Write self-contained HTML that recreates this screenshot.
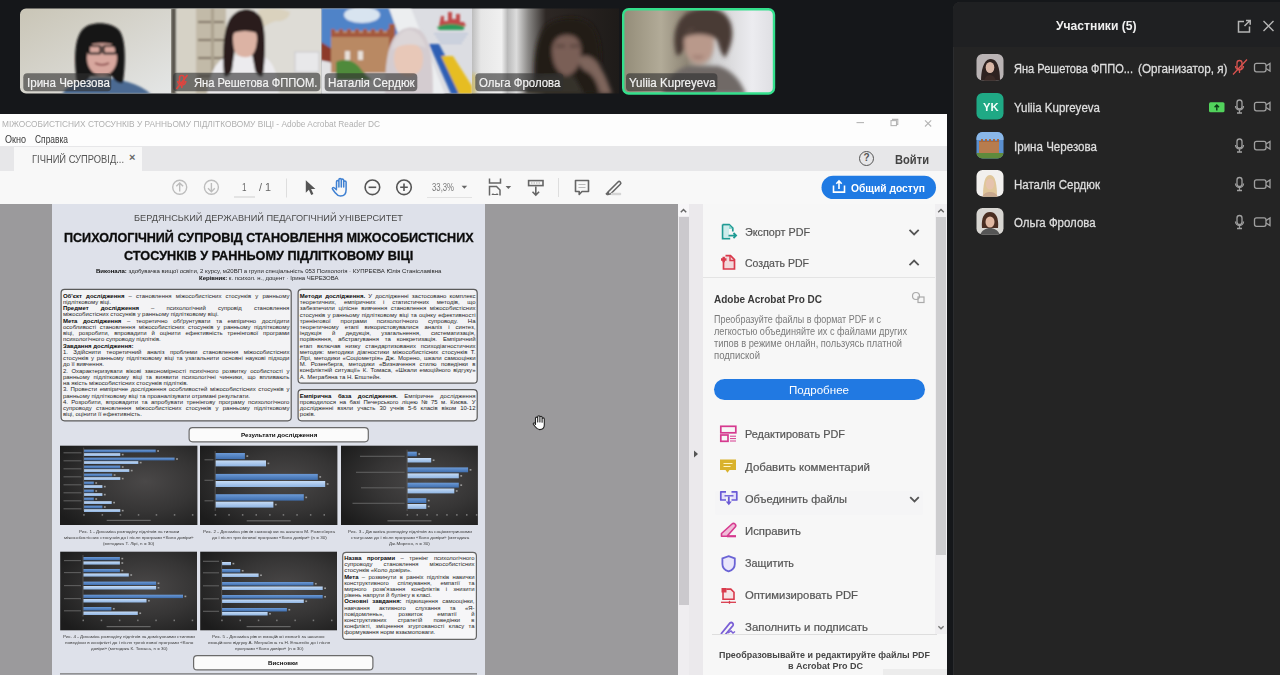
<!DOCTYPE html>
<html><head><meta charset="utf-8">
<style>
*{margin:0;padding:0;box-sizing:border-box}
html,body{width:1280px;height:675px;overflow:hidden;background:#15171a;font-family:"Liberation Sans",sans-serif}
.abs{position:absolute}
/* video tiles */
.tile{position:absolute;top:8px;height:86px;overflow:hidden}
.lbl{position:absolute;left:3px;top:73px;height:18px;border-radius:4px;background:rgba(40,40,40,.62);color:#f2f2f2;font-size:12.5px;line-height:18px;padding:0 4px;white-space:nowrap}
/* participants */
#pp{position:absolute;left:953px;top:2px;width:327px;height:673px;background:#242424;border-top-left-radius:7px;box-shadow:inset 1px 1px 0 #2b2c2e;overflow:hidden}
#pph{position:absolute;left:0;top:0;width:327px;height:45px;background:#1f2022;border-top-left-radius:7px}
.prow{position:absolute;left:0;width:327px;height:38px}
.av{position:absolute;left:24px;top:6px;width:26px;height:26px;border-radius:6px;overflow:hidden}
.pn{position:absolute;left:61px;top:0;line-height:38px;font-size:12.5px;color:#dcdcdc;white-space:nowrap}
/* acrobat */
#acro{position:absolute;left:0;top:114px;width:947px;height:561px;background:#fff;overflow:hidden}
#doc{position:absolute;left:0;top:90px;width:678px;height:471px;background:#9b9a9c}
#page{position:absolute;left:52px;top:0;width:433px;height:480px;background:#dfe2eb}
#rp{position:absolute;left:703px;top:90px;width:244px;height:471px;background:#f7f7f7}
.ri{position:absolute;left:744.5px;font-size:11.5px;color:#555;-webkit-text-stroke:0.2px #555;white-space:nowrap;line-height:14px}
.pt{position:absolute;white-space:nowrap;color:#262626}
.pt b{color:#0a0a0a}
#poster{position:absolute;left:52px;top:204px;width:433px;height:471px;overflow:hidden;background:#dee1ea}
</style></head><body>

<!-- video strip -->
<svg class="abs" style="left:0;top:0" width="800" height="100">
  <defs>
    <filter id="bl1" x="-10%" y="-10%" width="120%" height="120%"><feGaussianBlur stdDeviation="1.3"/></filter>
    <filter id="bl2" x="-10%" y="-10%" width="120%" height="120%"><feGaussianBlur stdDeviation="3"/></filter>
    <filter id="bl3" x="-10%" y="-10%" width="120%" height="120%"><feGaussianBlur stdDeviation="2"/></filter>
    <clipPath id="t1"><path d="M26 8.4h145v85H26a6 6 0 0 1-6-6V14.4a6 6 0 0 1 6-6z"/></clipPath>
    <clipPath id="t2"><rect x="171" y="8.4" width="150.5" height="85"/></clipPath>
    <clipPath id="t3"><rect x="321.5" y="8.4" width="150.5" height="85"/></clipPath>
    <clipPath id="t4"><rect x="472" y="8.4" width="147" height="85"/></clipPath>
    <clipPath id="t5"><rect x="623" y="9" width="151" height="84.5" rx="5"/></clipPath>
    <linearGradient id="g1" x1="0" y1="0" x2="1" y2="1"><stop offset="0" stop-color="#c9c5b6"/><stop offset="0.6" stop-color="#d9d8d2"/><stop offset="1" stop-color="#e4e6e6"/></linearGradient>
    <linearGradient id="g4" x1="0" y1="0" x2="1" y2="0"><stop offset="0" stop-color="#bdbdbd"/><stop offset="0.06" stop-color="#e6e6e6"/><stop offset="0.2" stop-color="#f0f0f0"/><stop offset="0.24" stop-color="#b9b9b9"/><stop offset="0.3" stop-color="#dcdcdc"/><stop offset="0.38" stop-color="#8a8886"/><stop offset="0.5" stop-color="#2d2724"/><stop offset="1" stop-color="#1e1b19"/></linearGradient>
    <linearGradient id="g5" x1="0" y1="0" x2="1" y2="0"><stop offset="0" stop-color="#938c78"/><stop offset="0.25" stop-color="#b2ab98"/><stop offset="0.42" stop-color="#8e8676"/><stop offset="0.6" stop-color="#cfcfd0"/><stop offset="0.85" stop-color="#ececf0"/><stop offset="1" stop-color="#dedee2"/></linearGradient>
  </defs>
  <!-- tile1 -->
  <g clip-path="url(#t1)">
    <rect x="20" y="8" width="151" height="86" fill="url(#g1)"/>
    <g filter="url(#bl1)">
      <path d="M62 94C70 82 85 78 102 78S140 84 151 94z" fill="#4b6b93"/>
      <path d="M77 83C74 60 74 40 82 30S112 22 119 30S126 62 123 83C118 84 114 80 112 76H90C88 80 84 84 77 83z" fill="#151313"/>
      <ellipse cx="102" cy="58" rx="15" ry="18" fill="#d8a79e"/>
      <path d="M84 47C84 32 92 26 102 26S120 32 120 47C112 42 92 42 84 47z" fill="#151313"/>
      <g fill="none" stroke="#1d1a1a" stroke-width="2.2"><rect x="89" y="46" width="11.5" height="7.5" rx="1"/><rect x="103.5" y="46" width="12.5" height="7.5" rx="1"/></g>
      <path d="M95 63c4 2.5 10 2.5 14 0" stroke="#8a4a4a" stroke-width="1.8" fill="none"/>
    </g>
  </g>
  <!-- tile2 -->
  <g clip-path="url(#t2)">
    <rect x="171" y="8" width="151" height="86" fill="#dcdbd4"/>
    <g filter="url(#bl1)">
      <rect x="171" y="8" width="5" height="86" fill="#5a5750"/>
      <rect x="177" y="8" width="20" height="86" fill="#d6d2c6"/>
      <rect x="196" y="8" width="30" height="86" fill="#c2baa8"/>
      <path d="M198 22h26M198 40h26M198 58h26M198 76h26" stroke="#7a705e" stroke-width="2"/>
      <rect x="211" y="8" width="3" height="86" fill="#aaa08e"/>
      <rect x="226" y="8" width="96" height="86" fill="#dedcd6"/>
      <path d="M258 10c8-3 24-2 32 2 0 5-6 10-14 9-8 2-12 8-16 4z" fill="#d8d0b8" opacity="0.8"/>
      <rect x="295" y="52" width="24" height="20" fill="#e8e8ea" stroke="#c8c8cc" stroke-width="1"/>
      <path d="M207 94c2-20 10-36 22-38l33 0c12 4 16 20 17 38z" fill="#ecebee"/>
      <path d="M224 76c-2-24-1-50 8-60s22-8 28 0 6 36 3 60c-4 2-7-2-8-6l-4-22h-16l-3 22c-2 6-5 8-8 6z" fill="#2a1f1e"/>
      <path d="M233 38c0-7 4-10 12-10s12 3 12 10c0 8-2 14-5 17s-10 3-14 0-5-9-5-17z" fill="#dcb3a4"/>
      <path d="M231 34c3-9 24-11 28 0-8-4-20-4-28 0z" fill="#2a1f1e"/>
    </g>
  </g>
  <!-- tile3 -->
  <g clip-path="url(#t3)">
    <rect x="321" y="8" width="152" height="86" fill="#dcdde2"/>
    <g filter="url(#bl1)">
      <path d="M321 8h68l14 40h-82z" fill="#4f83c8"/>
      <ellipse cx="362" cy="15" rx="18" ry="8" fill="#d8e4f0"/>
      <path d="M389 8h22l34 86h-24z" fill="#eceef0"/>
      <rect x="321" y="62" width="70" height="32" fill="#e2e2e4"/>
      <path d="M321 42l16 10v12l-16-4z" fill="#8d3a2a"/>
      <rect x="331" y="31" width="60" height="42" fill="#b98963"/>
      <path d="M331 37v-8h4v4h4v-4h4v4h4v-4h4v4h4v-4h4v4h4v-4h4v4h4v-4h4v4h4v-4h4v4h4v-4h4v8z" fill="#a4583c"/>
      <rect x="389" y="24" width="6" height="48" fill="#a35a3e"/>
      <path d="M336 62c8-4 18-2 24 6s8 8 12 12h-36z" fill="#4f8a3a"/>
      <rect x="345" y="51" width="5" height="9" fill="#e8e0d8"/>
      <rect x="358" y="51" width="5" height="9" fill="#e8e0d8"/>
      <path d="M429 44h10l26 50h-14z" fill="#2f5fb4"/>
      <path d="M441 56h12l19 30v8h-13z" fill="#e6bd22"/>
      <path d="M439 26l2-10h3v5h4v-9h4v7h4v-5h4v8h4l2 4z" fill="#c04a4a"/>
      <path d="M437 27c8-4 20-4 28 0l-2 3h-24z" fill="#2f9a5a"/>
      <path d="M434 34h34M436 37h30M438 40h26M440 43h22" stroke="#94a8cc" stroke-width="0.7"/>
      <path d="M385 94c0-30 2-62 22-66s26 18 26 66z" fill="#d4ccd0"/>
      <path d="M394 58c0-10 5-15 14-15s15 5 15 15-3 17-15 19c-11-2-14-9-14-19z" fill="#e8c8b8"/>
      <path d="M392 50c2-12 10-20 17-20s15 8 17 18c-10-5-24-5-34 2z" fill="#dcd6d8"/>
    </g>
  </g>
  <!-- tile4 -->
  <g clip-path="url(#t4)">
    <rect x="472" y="8" width="148" height="86" fill="url(#g4)"/>
    <g filter="url(#bl3)">
      <path d="M536 94c-4-30 0-58 10-68s36-12 46 0 10 36 6 68z" fill="#231c19"/>
      <path d="M552 50c0-9 6-15 15-15s14 6 14 15-2 22-14 26c-11-2-15-15-15-26z" fill="#7a5f56"/>
      <path d="M556 46h9M570 46h9" stroke="#3a2a26" stroke-width="2"/>
      <path d="M578 58c8-4 14-2 20 6s10 18 14 30h-12c-2-10-6-18-12-22-6-2-10-8-10-14z" fill="#7e655c"/>
      <path d="M524 94c4-10 10-16 20-18h30l10 18z" fill="#36302b"/>
      <rect x="472" y="74" width="2.5" height="20" fill="#d8b820"/>
    </g>
  </g>
  <!-- tile5 -->
  <g clip-path="url(#t5)">
    <rect x="623" y="8" width="152" height="86" fill="url(#g5)"/>
    <g filter="url(#bl3)">
      <path d="M662 94c4-14 12-24 26-28h30c14 4 22 14 28 28z" fill="#6f6966"/>
      <path d="M677 56c-6-18-2-40 16-46s34 0 38 14-2 26-6 34c-4-4-6-12-8-18-6-6-24-8-30 0-2 8-4 14-10 16z" fill="#4a3b35"/>
      <path d="M684 42c0-9 6-14 14-14s16 5 16 14c0 12-4 21-15 22-10-1-15-10-15-22z" fill="#b9998b"/>
      <path d="M683 38c6-10 16-12 24-10s9 6 8 10c-10-5-22-5-32 0z" fill="#4a3b35"/>
      <path d="M693 56c3 2 8 2 10 0" stroke="#7a5550" stroke-width="1.5" fill="none"/>
    </g>
  </g>
  <rect x="623.2" y="9.2" width="150.8" height="84.3" rx="5.5" fill="none" stroke="#34e08d" stroke-width="2.4"/>
  <!-- label backgrounds -->
  <rect x="23.3" y="73.3" width="88" height="18" rx="4" fill="rgba(48,48,48,0.62)"/>
  <rect x="173" y="72.7" width="147.3" height="18.6" rx="4" fill="rgba(48,48,48,0.62)"/>
  <rect x="324.7" y="73.3" width="92.6" height="18" rx="4" fill="rgba(48,48,48,0.62)"/>
  <rect x="475.3" y="73.3" width="88" height="18" rx="4" fill="rgba(48,48,48,0.62)"/>
  <rect x="626" y="73.3" width="91.4" height="18" rx="4" fill="rgba(48,48,48,0.62)"/>
  <g stroke="#e0443e" stroke-width="1.6" fill="none"><rect x="179.5" y="75.5" width="4.5" height="8" rx="2.2"/><path d="M177.8 81a4 4 0 0 0 8 0M181.8 85v3M187.5 75l-11 14"/></g>
</svg>
<div class="abs" style="transform:scaleX(0.9644);transform-origin:0 0;left:26.7px;top:75.5px;font-size:12px;color:#f2f2f2;-webkit-text-stroke:0.2px #f2f2f2;white-space:nowrap">Ірина Черезова</div>
<div class="abs" style="transform:scaleX(0.9293);transform-origin:0 0;left:193.7px;top:75.5px;font-size:12px;color:#f2f2f2;-webkit-text-stroke:0.2px #f2f2f2;white-space:nowrap">Яна Решетова ФППОМ.</div>
<div class="abs" style="transform:scaleX(0.9675);transform-origin:0 0;left:328px;top:75.5px;font-size:12px;color:#f2f2f2;-webkit-text-stroke:0.2px #f2f2f2;white-space:nowrap">Наталія Сердюк</div>
<div class="abs" style="transform:scaleX(0.9507);transform-origin:0 0;left:478.7px;top:75.5px;font-size:12px;color:#f2f2f2;-webkit-text-stroke:0.2px #f2f2f2;white-space:nowrap">Ольга Фролова</div>
<div class="abs" style="transform:scaleX(0.9677);transform-origin:0 0;left:628.5px;top:75.5px;font-size:12px;color:#f2f2f2;-webkit-text-stroke:0.2px #f2f2f2;white-space:nowrap">Yuliia Kupreyeva</div>

<!-- participants panel -->
<div id="pp">
  <div id="pph"></div>
</div>
<div class="abs" style="transform:scaleX(0.9713);transform-origin:0 0;left:1056px;top:19px;font-size:12.5px;font-weight:bold;color:#f0f0f0;white-space:nowrap">Участники (5)</div>
<svg class="abs" style="left:0;top:0" width="1280" height="250">
  <defs>
    <clipPath id="av1"><rect x="976.5" y="54" width="27" height="26.5" rx="6"/></clipPath>
    <clipPath id="av3"><rect x="976.5" y="132" width="27" height="26.5" rx="6"/></clipPath>
    <clipPath id="av4"><rect x="976.5" y="170" width="27" height="26.5" rx="6"/></clipPath>
    <clipPath id="av5"><rect x="976.5" y="208" width="27" height="26.5" rx="6"/></clipPath>
  </defs>
  <g clip-path="url(#av1)">
    <rect x="976" y="54" width="28" height="27" fill="#b9b3b4"/>
    <path d="M981 81c0-9 2-21 9-22s10 8 10 22z" fill="#2e2220"/>
    <ellipse cx="990" cy="67.5" rx="4.3" ry="5.5" fill="#d8b6a6"/>
    <path d="M984 81c1-4 3-6 6-6s5 2 6 6z" fill="#3b2a26"/>
  </g>
  <rect x="976.5" y="93" width="27" height="26.5" rx="6" fill="#1fa985"/>
  <g clip-path="url(#av3)">
    <rect x="976" y="132" width="28" height="27" fill="#5a8fd0"/>
    <rect x="976" y="132" width="28" height="8" fill="#8ab7e8"/>
    <path d="M979 142h20v13h-20z" fill="#b77c4e"/>
    <path d="M979 141h2v-2h2v2h2v-2h2v2h2v-2h2v2h2v-2h2v2h2v-2h2v3h-20z" fill="#a8683e"/>
    <rect x="976" y="153" width="28" height="6" fill="#5f8a3c"/>
  </g>
  <g clip-path="url(#av4)">
    <rect x="976" y="170" width="28" height="27" fill="#f2f0ee"/>
    <path d="M983 197c0-10 1-22 7-22s7 12 7 22z" fill="#e0c69a"/>
    <ellipse cx="990" cy="184" rx="4.2" ry="5.5" fill="#e6c3ad"/>
    <path d="M982 197c2-4 5-5 8-5s6 1 8 5z" fill="#c9a98f"/>
  </g>
  <g clip-path="url(#av5)">
    <rect x="976" y="208" width="28" height="27" fill="#d8d6d2"/>
    <path d="M982 228c-1-10 2-16 8-16s9 6 8 16z" fill="#4a2e22"/>
    <ellipse cx="990" cy="222" rx="4.5" ry="5.5" fill="#e0b8a2"/>
    <path d="M980 235c2-5 6-7 10-7s8 2 10 7z" fill="#555"/>
  </g>
  <g fill="none" stroke="#a0a0a0" stroke-width="1.3"><rect x="1254.5" y="63.3" width="11.5" height="8.5" rx="2"/><path d="M1266.0 66.0l4-2.5v7.5l-4-2.5"/></g><g fill="none" stroke="#a0a0a0" stroke-width="1.3"><rect x="1254.5" y="102.3" width="11.5" height="8.5" rx="2"/><path d="M1266.0 105.0l4-2.5v7.5l-4-2.5"/></g><g fill="none" stroke="#a0a0a0" stroke-width="1.3"><rect x="1237.0" y="100.0" width="5" height="9" rx="2.5"/><path d="M1235.5 106.0a4 4 0 0 0 8 0M1239.5 110.0v3M1237.0 113.0h5"/></g><g fill="none" stroke="#a0a0a0" stroke-width="1.3"><rect x="1254.5" y="141.3" width="11.5" height="8.5" rx="2"/><path d="M1266.0 144.0l4-2.5v7.5l-4-2.5"/></g><g fill="none" stroke="#a0a0a0" stroke-width="1.3"><rect x="1237.0" y="139.0" width="5" height="9" rx="2.5"/><path d="M1235.5 145.0a4 4 0 0 0 8 0M1239.5 149.0v3M1237.0 152.0h5"/></g><g fill="none" stroke="#a0a0a0" stroke-width="1.3"><rect x="1254.5" y="179.8" width="11.5" height="8.5" rx="2"/><path d="M1266.0 182.5l4-2.5v7.5l-4-2.5"/></g><g fill="none" stroke="#a0a0a0" stroke-width="1.3"><rect x="1237.0" y="177.5" width="5" height="9" rx="2.5"/><path d="M1235.5 183.5a4 4 0 0 0 8 0M1239.5 187.5v3M1237.0 190.5h5"/></g><g fill="none" stroke="#a0a0a0" stroke-width="1.3"><rect x="1254.5" y="217.8" width="11.5" height="8.5" rx="2"/><path d="M1266.0 220.5l4-2.5v7.5l-4-2.5"/></g><g fill="none" stroke="#a0a0a0" stroke-width="1.3"><rect x="1237.0" y="215.5" width="5" height="9" rx="2.5"/><path d="M1235.5 221.5a4 4 0 0 0 8 0M1239.5 225.5v3M1237.0 228.5h5"/></g><g fill="none" stroke="#d9534f" stroke-width="1.3"><rect x="1237" y="60.5" width="5" height="9" rx="2.5"/><path d="M1235.5 66a4 4 0 0 0 8 0M1239.5 70v3M1247 59.5l-14 15"/></g><rect x="1209" y="102.2" width="15.5" height="10" rx="1.5" fill="#52d35c"/><path d="M1216.8 110.5v-5M1214.6 107.3l2.2-2.2 2.2 2.2" stroke="#0b3a17" stroke-width="1.4" fill="none"/><path d="M1244 21.5h-5.5v10.5h11v-5.5M1244.5 26l5.5-5.5M1246 20.5h4.2v4.2" fill="none" stroke="#b5b5b5" stroke-width="1.5"/><path d="M1263.5 21l10 10M1273.5 21l-10 10" stroke="#b5b5b5" stroke-width="1.4"/>
</svg>
<div class="abs" style="transform:scaleX(1.0209);transform-origin:0 0;left:982.8px;top:100.5px;font-size:11px;font-weight:bold;color:#f4fffb;white-space:nowrap">YK</div>
<div class="abs" style="transform:scaleX(0.8831);transform-origin:0 0;left:1014px;top:62px;font-size:12.5px;color:#dedede;-webkit-text-stroke:0.3px #dedede;white-space:nowrap">Яна Решетова ФППО...</div>
<div class="abs" style="transform:scaleX(0.9349);transform-origin:0 0;left:1138px;top:62px;font-size:12.5px;color:#dedede;-webkit-text-stroke:0.3px #dedede;white-space:nowrap">(Организатор, я)</div>
<div class="abs" style="transform:scaleX(0.9235);transform-origin:0 0;left:1014px;top:101px;font-size:12.5px;color:#dedede;-webkit-text-stroke:0.3px #dedede;white-space:nowrap">Yuliia Kupreyeva</div>
<div class="abs" style="transform:scaleX(0.9258);transform-origin:0 0;left:1014px;top:140px;font-size:12.5px;color:#dedede;-webkit-text-stroke:0.3px #dedede;white-space:nowrap">Ірина Черезова</div>
<div class="abs" style="transform:scaleX(0.9213);transform-origin:0 0;left:1014px;top:178px;font-size:12.5px;color:#dedede;-webkit-text-stroke:0.3px #dedede;white-space:nowrap">Наталія Сердюк</div>
<div class="abs" style="transform:scaleX(0.9160);transform-origin:0 0;left:1014px;top:216px;font-size:12.5px;color:#dedede;-webkit-text-stroke:0.3px #dedede;white-space:nowrap">Ольга Фролова</div>


<!-- acrobat window -->
<div id="acro">

  <div class="abs" style="left:0;top:0;width:947px;height:32px;background:#fdfdfd"></div>
  <div class="abs" style="transform:scaleX(0.9248);transform-origin:0 0;left:2px;top:4.5px;font-size:9px;color:#b0b0b0;white-space:nowrap">МІЖОСОБИСТІСНИХ СТОСУНКІВ У РАННЬОМУ ПІДЛІТКОВОМУ ВІЦІ - Adobe Acrobat Reader DC</div>
  <!-- window controls -->
  <svg class="abs" style="left:850px;top:0" width="97" height="17"><g fill="none" stroke="#b5b5b5" stroke-width="1.1"><path d="M6.5 8.6h7.5"/><rect x="41" y="6.6" width="5.5" height="5"/><path d="M42.5 6.6v-1.2h5.3v5h-1.3"/><path d="M75 6.3l6.2 6.2M81.2 6.3l-6.2 6.2"/></g></svg>
  <div class="abs" style="transform:scaleX(0.8604);transform-origin:0 0;left:5px;top:19px;font-size:10.5px;color:#3a3a3a;white-space:nowrap">Окно</div>
  <div class="abs" style="transform:scaleX(0.8009);transform-origin:0 0;left:35px;top:19px;font-size:10.5px;color:#3a3a3a;white-space:nowrap">Справка</div>
  <!-- tab bar -->
  <div class="abs" style="left:0;top:32px;width:947px;height:25px;background:#e7e7e9"></div>
  <div class="abs" style="left:14px;top:33px;width:128px;height:24px;background:#f8f8f8"></div>
  <div class="abs" style="transform:scaleX(0.8495);transform-origin:0 0;left:32px;top:39px;font-size:11px;color:#555;white-space:nowrap">ГІЧНИЙ СУПРОВІД...</div>
  <div class="abs" style="left:129px;top:37px;font-size:11px;color:#666;font-weight:bold">×</div>
  <div class="abs" style="left:859px;top:37px;width:15px;height:15px;border:1.3px solid #555;border-radius:50%;font-size:10px;line-height:12.5px;text-align:center;color:#555;font-weight:bold">?</div>
  <div class="abs" style="transform:scaleX(0.9279);transform-origin:0 0;left:895px;top:39px;font-size:12px;color:#444;font-weight:bold;white-space:nowrap">Войти</div>
  <!-- toolbar -->
  <div class="abs" style="left:0;top:57px;width:947px;height:33px;background:#f8f8f8"></div>

  <svg class="abs" style="left:0;top:57px" width="947" height="33" viewBox="0 57 947 33">
    <g fill="none" stroke="#bdbdbd" stroke-width="1.4">
      <circle cx="179.7" cy="73.3" r="7"/><path d="M179.7 77.5V69.3M176.3 72.3l3.4-3.4 3.4 3.4"/>
      <circle cx="211.4" cy="73.3" r="7"/><path d="M211.4 69.1v8.2M208 74.3l3.4 3.4 3.4-3.4"/>
    </g>
    <path d="M234 83h21" stroke="#d6d6d6" stroke-width="1.2"/>
    <path d="M286.5 64.5v19" stroke="#dedede" stroke-width="1"/>
    <path d="M558.5 64v19" stroke="#dedede" stroke-width="1"/>
    <path d="M427 83.5h45" stroke="#e2e2e2" stroke-width="1.2"/>
    <!-- cursor -->
    <path d="M305.8 66.2v12.6l3.1-3 2.3 5.1 2.2-1-2.3-5h4.3z" fill="#555"/>
    <!-- hand -->
    <path d="M336.5 74.2v-6.4a1.2 1.2 0 0 1 2.4 0v5.2v-7.3a1.2 1.2 0 0 1 2.4 0v7.2v-6.6a1.2 1.2 0 0 1 2.4 0v6.8v-5a1.2 1.2 0 0 1 2.4 0v7.6c0 4-2.2 6.3-5.6 6.3-2.6 0-3.8-1.4-5.3-3.3l-2.6-3.4a1.1 1.1 0 0 1 1.6-1.5l2.3 2" fill="none" stroke="#3f80d2" stroke-width="1.5" stroke-linejoin="round" stroke-linecap="round"/>
    <g fill="none" stroke="#555" stroke-width="1.6">
      <circle cx="372.4" cy="73.3" r="7.3"/><path d="M368.6 73.3h7.6"/>
      <circle cx="404" cy="73.3" r="7.3"/><path d="M400.2 73.3h7.6M404 69.5v7.6"/>
    </g>
    <path d="M461.6 71.8h5.6l-2.8 3z" fill="#666"/>
    <path d="M505.6 72h5.6l-2.8 3z" fill="#666"/>
    <!-- fit page -->
    <g fill="none" stroke="#666" stroke-width="1.5">
      <path d="M489.5 64.5v4.5h11v-4.5"/>
      <path d="M489.5 81.5v-9h7l3.5 3.5v5.5"/>
      <path d="M492 80.5h6M492 80.5l1.2-1.2M498 80.5l-1.2-1.2" stroke-width="1"/>
    </g>
    <!-- scroll -->
    <rect x="528.6" y="66.6" width="14.4" height="5" fill="none" stroke="#666" stroke-width="1.6"/>
    <path d="M531 69h10" stroke="#aaa" stroke-width="1" stroke-dasharray="1.5 1"/>
    <path d="M535.8 72.5v8.6M532.5 77.8l3.3 3.3 3.3-3.3" fill="none" stroke="#666" stroke-width="1.6"/>
    <!-- comment -->
    <path d="M575.5 66.5h13v11h-6.5l-2.8 3v-3h-3.7z" fill="none" stroke="#666" stroke-width="1.6" stroke-linejoin="round"/>
    <path d="M578.5 70.5h7M578.5 73.5h7" stroke="#bbb" stroke-width="1"/>
    <!-- highlighter -->
    <path d="M608.5 77.5l9.5-9.5a1.6 1.6 0 0 1 2.3 2.3l-9.5 9.5-3 .8z" fill="none" stroke="#666" stroke-width="1.6" stroke-linejoin="round"/>
    <path d="M606 80.5l2.5-2.5" stroke="#666" stroke-width="1.8"/>
    <path d="M612 80h8" stroke="#d5d5d5" stroke-width="2.5" stroke-linecap="round"/>
    <!-- share button -->
    <rect x="821.5" y="61.7" width="114.5" height="23.4" rx="11.7" fill="#1f7ae3"/>
    <path d="M833.5 71.5v6.6h11v-6.6M839 75v-7.8M836.3 69.7l2.7-2.7 2.7 2.7" fill="none" stroke="#fff" stroke-width="1.6"/>
  </svg>
  <div class="abs" style="transform:scaleX(0.8090);transform-origin:0 0;left:241.8px;top:68px;font-size:10px;color:#666">1</div>
  <div class="abs" style="transform:scaleX(1.0787);transform-origin:0 0;left:259px;top:68px;font-size:10px;color:#666;white-space:nowrap">/ 1</div>
  <div class="abs" style="transform:scaleX(0.7758);transform-origin:0 0;left:431.5px;top:68px;font-size:10px;color:#7a7a7a;white-space:nowrap">33,3%</div>
  <div class="abs" style="transform:scaleX(0.8924);transform-origin:0 0;left:851px;top:67.5px;font-size:11.5px;color:#fff;font-weight:bold;white-space:nowrap">Общий доступ</div>
  <div id="doc"><div id="page"></div></div>
  <div id="rp"></div>
  <!-- doc scrollbar + strip -->
  <div class="abs" style="left:678px;top:90px;width:11px;height:471px;background:#efedf0"></div>
  <div class="abs" style="left:678px;top:90px;width:11px;height:12px;background:#f7f6f8"></div>
  <svg class="abs" style="left:678px;top:90px" width="11" height="12"><path d="M2.8 8.2l2.7-2.7 2.7 2.7" fill="none" stroke="#666" stroke-width="1.5"/></svg>
  <div class="abs" style="left:679px;top:103px;width:9.5px;height:388px;background:#cbc9cd"></div>
  <div class="abs" style="left:689px;top:90px;width:14px;height:471px;background:#ebe9ec"></div>
  <svg class="abs" style="left:689px;top:334px" width="14" height="12"><path d="M5 2.5l4 3.5-4 3.5z" fill="#555"/></svg>
  <!-- right pane scrollbar -->
  <div class="abs" style="left:935px;top:90px;width:12px;height:430px;background:#f0eff1"></div>
  <svg class="abs" style="left:935px;top:90px" width="12" height="12"><path d="M3.2 8.2l2.8-2.8 2.8 2.8" fill="none" stroke="#666" stroke-width="1.4"/></svg>
  <div class="abs" style="left:936px;top:103px;width:10px;height:338px;background:#cdcdcf"></div>
  <svg class="abs" style="left:935px;top:508px" width="12" height="12"><path d="M3.4 4.2l2.6 2.6 2.6-2.6" fill="none" stroke="#777" stroke-width="1.3"/></svg>
  <!-- right pane items -->
  <div class="abs" style="left:703px;top:163px;width:232px;height:1px;background:#e4e4e4"></div>
  <div class="abs" style="left:715px;top:377px;width:208px;height:24px;background:#f5f5f6;border-radius:3px"></div>
  <div class="ri" style="transform:scaleX(0.9365);transform-origin:0 0;top:111px">Экспорт PDF</div>
  <div class="ri" style="transform:scaleX(0.9155);transform-origin:0 0;top:142px">Создать PDF</div>
  <div class="abs" style="transform:scaleX(0.9094);transform-origin:0 0;left:713.5px;top:179px;font-size:11px;font-weight:bold;color:#3a3a3a;white-space:nowrap">Adobe Acrobat Pro DC</div>
  <div class="abs" style="transform:scaleX(0.8939);transform-origin:0 0;left:713.5px;top:200px;font-size:10px;color:#7a7a7a;white-space:nowrap">Преобразуйте файлы в формат PDF и с</div>
  <div class="abs" style="transform:scaleX(0.9141);transform-origin:0 0;left:713.5px;top:212px;font-size:10px;color:#7a7a7a;white-space:nowrap">легкостью объединяйте их с файлами других</div>
  <div class="abs" style="transform:scaleX(0.9289);transform-origin:0 0;left:713.5px;top:224px;font-size:10px;color:#7a7a7a;white-space:nowrap">типов в режиме онлайн, пользуясь платной</div>
  <div class="abs" style="transform:scaleX(0.9537);transform-origin:0 0;left:713.5px;top:236px;font-size:10px;color:#7a7a7a;white-space:nowrap">подпиской</div>
  <div class="abs" style="left:713.5px;top:265px;width:211px;height:21px;border-radius:11px;background:#2179e2"></div>
  <div class="abs" style="transform:scaleX(1.0060);transform-origin:0 0;left:788.7px;top:270px;font-size:11.5px;color:#fff;white-space:nowrap">Подробнее</div>
  <div class="ri" style="transform:scaleX(0.9466);transform-origin:0 0;top:313px">Редактировать PDF</div>
  <div class="ri" style="transform:scaleX(1.0006);transform-origin:0 0;top:346px">Добавить комментарий</div>
  <div class="ri" style="transform:scaleX(0.9613);transform-origin:0 0;top:378px">Объединить файлы</div>
  <div class="ri" style="transform:scaleX(0.9854);transform-origin:0 0;top:410px">Исправить</div>
  <div class="ri" style="transform:scaleX(0.9389);transform-origin:0 0;top:442px">Защитить</div>
  <div class="ri" style="transform:scaleX(0.9803);transform-origin:0 0;top:474px">Оптимизировать PDF</div>
  <div class="ri" style="transform:scaleX(0.9907);transform-origin:0 0;top:506px">Заполнить и подписать</div>
  <svg class="abs" style="left:703px;top:90px" width="244" height="471" viewBox="703 204 244 471">
    <g fill="none" stroke="#555" stroke-width="1.8">
      <path d="M909.5 229.8l4.6 4.6 4.6-4.6"/>
      <path d="M909.5 265.2l4.6-4.6 4.6 4.6"/>
      <path d="M910.2 497.2l4.3 4.3 4.3-4.3"/>
    </g>
    <!-- export icon teal -->
    <path d="M722.6 224.6h6.6l3.6 3.6v3.4M722.6 224.6v14h7.6" fill="none" stroke="#1f9b94" stroke-width="1.7"/>
    <rect x="724" y="226" width="5" height="11.5" fill="#cdeceb"/>
    <path d="M729 224.8v4.2h3.6z" fill="#8fd6d0"/>
    <path d="M728.5 235.6h7M733.5 233l2.6 2.6-2.6 2.6" fill="none" stroke="#1f9b94" stroke-width="1.8"/>
    <!-- create icon red -->
    <path d="M723.5 258.5v10.5h11v-9.3l-4-4h-5" fill="#f2d9dc" stroke="#d93a4c" stroke-width="1.7"/>
    <path d="M721 259.5h5.5M723.7 256.8v5.4" stroke="#d93a4c" stroke-width="2.4"/>
    <path d="M730 256v4.5h4.5" fill="none" stroke="#d93a4c" stroke-width="1.4"/>
    <!-- adobe copy icon -->
    <g fill="none" stroke="#aaa" stroke-width="1.2"><circle cx="916" cy="296" r="3.5"/><rect x="918" y="297" width="6" height="5.5"/></g>
    <!-- edit pdf -->
    <g fill="none" stroke="#d63a8f" stroke-width="1.7">
      <rect x="720.8" y="426.3" width="15" height="6.5"/>
      <rect x="720.8" y="435" width="7.2" height="6.3"/>
      <path d="M730 436.2h6M730 438.6h6M730 441h6" stroke-width="1"/>
    </g>
    <!-- comment yellow -->
    <path d="M720 459.5h16v10.5h-6.5l-2 2.8-2-2.8h-5.5z" fill="#d9b22c"/>
    <path d="M723.5 463.5h9M723.5 466.5h7" stroke="#fff3c4" stroke-width="1.1"/>
    <!-- combine purple -->
    <g fill="#e4e0fa" stroke="#6a5ad6" stroke-width="1.7" stroke-linejoin="round">
      <path d="M726 491.8h-5.2v8.2h5.2"/>
      <path d="M731.5 491.8h5.3v8.2h-5.3"/>
    </g>
    <path d="M724.5 495.8h9" stroke="#6a5ad6" stroke-width="1.4"/>
    <path d="M728.8 496.5v5.5" stroke="#6a5ad6" stroke-width="1.8"/>
    <path d="M725.8 501.5h6l-3 3.8z" fill="#6a5ad6"/>
    <!-- fix pink -->
    <path d="M721.5 533.5l10.5-9.5a2.2 2.2 0 0 1 3.2 3l-8.2 9.2h-5.5z" fill="#f0bcd8" stroke="#d63a8f" stroke-width="1.6" stroke-linejoin="round"/>
    <path d="M727 536.2h9" stroke="#d63a8f" stroke-width="2.2"/>
    <!-- protect -->
    <path d="M728.6 556.2l6.2 2.3v5.5c0 4.2-2.8 6.4-6.2 7.4-3.4-1-6.2-3.2-6.2-7.4v-5.5z" fill="#e9e6fb" stroke="#6a63d5" stroke-width="1.8"/>
    <!-- optimize red -->
    <path d="M723 590.5v8.8h11v-7l-3.2-3.2h-4.5" fill="#f6e3e5" stroke="#d93a4c" stroke-width="1.6"/>
    <rect x="721.5" y="588" width="5" height="4.5" fill="#d93a4c"/>
    <path d="M721 602.3h15" stroke="#d93a4c" stroke-width="1.3"/>
    <path d="M729.5 600.8v3" stroke="#d93a4c" stroke-width="1.3"/>
    <!-- fill & sign purple -->
    <path d="M721 634l9-11a2 2 0 0 1 3 2.5l-8 9.5" fill="none" stroke="#7a5fd6" stroke-width="1.8"/>
    <path d="M728 633l3-2 2 2 2-1.5" fill="none" stroke="#7a5fd6" stroke-width="1.4"/>
  </svg>
  <div class="abs" style="left:703px;top:521px;width:244px;height:40px;background:#f7f7f7"></div>
  <div class="abs" style="transform:scaleX(0.9575);transform-origin:0 0;left:719.4px;top:536px;font-size:9.3px;font-weight:bold;color:#454545;white-space:nowrap">Преобразовывайте и редактируйте файлы PDF</div>
  <div class="abs" style="transform:scaleX(0.9674);transform-origin:0 0;left:787.8px;top:547px;font-size:9.3px;font-weight:bold;color:#454545;white-space:nowrap">в Acrobat Pro DC</div>
  <div class="abs" style="left:712px;top:520px;width:225px;height:1px;background:#dedede"></div>
  <div class="abs" style="left:883px;top:555px;width:64px;height:6px;background:#ececec"></div>
</div>

<svg class="abs" style="left:530px;top:412px" width="20" height="20" viewBox="0 0 20 20"><path d="M5.5 12.5V6.2a1.1 1.1 0 0 1 2.2 0V10V4.8a1.1 1.1 0 0 1 2.2 0V10V5.4a1.1 1.1 0 0 1 2.2 0V10.2V7a1.1 1.1 0 0 1 2.2 0v6c0 3-1.8 4.6-4.6 4.6-2 0-3-1-4.2-2.6L3.4 12.4a1 1 0 0 1 1.5-1.3z" fill="#fff" stroke="#222" stroke-width="1.1" stroke-linejoin="round"/></svg>
<div id="poster">
<!--PSVG--><svg class="abs" style="left:0;top:0" width="433" height="471" viewBox="52 204 433 471">
<defs>
<radialGradient id="cbg" cx="0.62" cy="0.45" r="0.75"><stop offset="0" stop-color="#4a4848"/><stop offset="0.5" stop-color="#363535"/><stop offset="1" stop-color="#1c1c1c"/></radialGradient>
<linearGradient id="bd" x1="0" y1="0" x2="0" y2="1"><stop offset="0" stop-color="#6c9ad6"/><stop offset="1" stop-color="#3f6eae"/></linearGradient>
<linearGradient id="bl" x1="0" y1="0" x2="0" y2="1"><stop offset="0" stop-color="#c6dcf6"/><stop offset="1" stop-color="#8fb4e2"/></linearGradient>
</defs>
<rect x="61.10" y="289.40" width="230.10" height="131.40" rx="3.5" fill="#f3f3f5" stroke="#5a5a5a" stroke-width="1.20"/>
<rect x="298.10" y="289.40" width="179.10" height="93.80" rx="3.5" fill="#f3f3f5" stroke="#5a5a5a" stroke-width="1.20"/>
<rect x="298.10" y="389.60" width="179.10" height="31.20" rx="3.5" fill="#f3f3f5" stroke="#5a5a5a" stroke-width="1.20"/>
<rect x="189.10" y="427.60" width="179.20" height="14.20" rx="3.5" fill="#fbfbfb" stroke="#6a6a6a" stroke-width="1.20"/>
<rect x="342.70" y="552.30" width="133.70" height="87.10" rx="3.5" fill="#f6f6f8" stroke="#666" stroke-width="1.20"/>
<rect x="193.60" y="655.60" width="179.30" height="14.30" rx="3.5" fill="#fbfbfb" stroke="#6a6a6a" stroke-width="1.20"/>
<path d="M60 673.8h417" stroke="#777" stroke-width="1.2"/>
<rect x="60.00" y="445.70" width="137.40" height="79.30" fill="url(#cbg)"/>
<rect x="83.20" y="514.10" width="1.5" height="1.6" fill="#7a7a7a"/>
<rect x="101.60" y="514.10" width="1.5" height="1.6" fill="#7a7a7a"/>
<rect x="119.70" y="514.10" width="1.5" height="1.6" fill="#7a7a7a"/>
<rect x="137.80" y="514.10" width="1.5" height="1.6" fill="#7a7a7a"/>
<rect x="155.70" y="514.10" width="1.5" height="1.6" fill="#7a7a7a"/>
<rect x="173.80" y="514.10" width="1.5" height="1.6" fill="#7a7a7a"/>
<rect x="191.90" y="514.10" width="1.5" height="1.6" fill="#7a7a7a"/>
<rect x="106.70" y="519.80" width="44.00" height="1.2" fill="#666"/>
<rect x="84.00" y="449.60" width="71.70" height="2.80" fill="url(#bd)"/>
<rect x="157.20" y="450.20" width="1.8" height="1.6" fill="#9a9a9a"/>
<rect x="84.00" y="453.20" width="36.30" height="2.80" fill="url(#bl)"/>
<rect x="121.80" y="453.80" width="1.8" height="1.6" fill="#9a9a9a"/>
<rect x="84.00" y="457.60" width="90.60" height="2.80" fill="url(#bd)"/>
<rect x="176.10" y="458.20" width="1.8" height="1.6" fill="#9a9a9a"/>
<rect x="84.00" y="461.20" width="54.30" height="2.80" fill="url(#bl)"/>
<rect x="139.80" y="461.80" width="1.8" height="1.6" fill="#9a9a9a"/>
<rect x="84.00" y="465.60" width="36.30" height="2.80" fill="url(#bd)"/>
<rect x="121.80" y="466.20" width="1.8" height="1.6" fill="#9a9a9a"/>
<rect x="84.00" y="469.20" width="45.30" height="2.80" fill="url(#bl)"/>
<rect x="130.80" y="469.80" width="1.8" height="1.6" fill="#9a9a9a"/>
<rect x="84.00" y="473.60" width="28.20" height="2.80" fill="url(#bd)"/>
<rect x="113.70" y="474.20" width="1.8" height="1.6" fill="#9a9a9a"/>
<rect x="84.00" y="477.20" width="36.30" height="2.80" fill="url(#bl)"/>
<rect x="121.80" y="477.80" width="1.8" height="1.6" fill="#9a9a9a"/>
<rect x="84.00" y="481.60" width="9.80" height="2.80" fill="url(#bd)"/>
<rect x="95.30" y="482.20" width="1.8" height="1.6" fill="#9a9a9a"/>
<rect x="84.00" y="485.20" width="18.40" height="2.80" fill="url(#bl)"/>
<rect x="103.90" y="485.80" width="1.8" height="1.6" fill="#9a9a9a"/>
<rect x="84.00" y="489.60" width="9.80" height="2.80" fill="url(#bd)"/>
<rect x="95.30" y="490.20" width="1.8" height="1.6" fill="#9a9a9a"/>
<rect x="84.00" y="493.20" width="18.40" height="2.80" fill="url(#bl)"/>
<rect x="103.90" y="493.80" width="1.8" height="1.6" fill="#9a9a9a"/>
<rect x="84.00" y="497.60" width="9.80" height="2.80" fill="url(#bd)"/>
<rect x="95.30" y="498.20" width="1.8" height="1.6" fill="#9a9a9a"/>
<rect x="84.00" y="501.20" width="27.70" height="2.80" fill="url(#bl)"/>
<rect x="113.20" y="501.80" width="1.8" height="1.6" fill="#9a9a9a"/>
<rect x="84.00" y="505.60" width="18.40" height="2.80" fill="url(#bd)"/>
<rect x="103.90" y="506.20" width="1.8" height="1.6" fill="#9a9a9a"/>
<rect x="84.00" y="509.20" width="36.30" height="2.80" fill="url(#bl)"/>
<rect x="121.80" y="509.80" width="1.8" height="1.6" fill="#9a9a9a"/>
<path d="M83.70 447.60v63.40" stroke="#6a6a6a" stroke-width="0.6"/>
<rect x="63.5" y="452.25" width="18" height="1.1" fill="#5e5e5e"/>
<rect x="63.5" y="460.25" width="18" height="1.1" fill="#5e5e5e"/>
<rect x="63.5" y="468.25" width="18" height="1.1" fill="#5e5e5e"/>
<rect x="63.5" y="476.25" width="18" height="1.1" fill="#5e5e5e"/>
<rect x="63.5" y="484.25" width="18" height="1.1" fill="#5e5e5e"/>
<rect x="63.5" y="492.25" width="18" height="1.1" fill="#5e5e5e"/>
<rect x="63.5" y="500.25" width="18" height="1.1" fill="#5e5e5e"/>
<rect x="63.5" y="508.25" width="18" height="1.1" fill="#5e5e5e"/>
<rect x="200.00" y="445.70" width="137.40" height="79.30" fill="url(#cbg)"/>
<rect x="214.70" y="514.10" width="1.5" height="1.6" fill="#7a7a7a"/>
<rect x="228.30" y="514.10" width="1.5" height="1.6" fill="#7a7a7a"/>
<rect x="241.90" y="514.10" width="1.5" height="1.6" fill="#7a7a7a"/>
<rect x="255.50" y="514.10" width="1.5" height="1.6" fill="#7a7a7a"/>
<rect x="269.10" y="514.10" width="1.5" height="1.6" fill="#7a7a7a"/>
<rect x="282.70" y="514.10" width="1.5" height="1.6" fill="#7a7a7a"/>
<rect x="296.30" y="514.10" width="1.5" height="1.6" fill="#7a7a7a"/>
<rect x="309.90" y="514.10" width="1.5" height="1.6" fill="#7a7a7a"/>
<rect x="323.50" y="514.10" width="1.5" height="1.6" fill="#7a7a7a"/>
<rect x="246.70" y="520.20" width="44.00" height="1.2" fill="#666"/>
<rect x="215.50" y="453.00" width="29.40" height="6.20" fill="url(#bd)"/>
<rect x="246.40" y="455.30" width="1.8" height="1.6" fill="#9a9a9a"/>
<rect x="215.50" y="460.40" width="50.50" height="6.00" fill="url(#bl)"/>
<rect x="267.50" y="462.60" width="1.8" height="1.6" fill="#9a9a9a"/>
<rect x="215.50" y="473.90" width="102.30" height="6.00" fill="url(#bd)"/>
<rect x="319.30" y="476.10" width="1.8" height="1.6" fill="#9a9a9a"/>
<rect x="215.50" y="481.00" width="109.70" height="6.00" fill="url(#bl)"/>
<rect x="326.70" y="483.20" width="1.8" height="1.6" fill="#9a9a9a"/>
<rect x="215.50" y="494.20" width="88.30" height="6.40" fill="url(#bd)"/>
<rect x="305.30" y="496.60" width="1.8" height="1.6" fill="#9a9a9a"/>
<rect x="215.50" y="501.60" width="57.90" height="6.00" fill="url(#bl)"/>
<rect x="274.90" y="503.80" width="1.8" height="1.6" fill="#9a9a9a"/>
<path d="M215.20 451.00v60.00" stroke="#6a6a6a" stroke-width="0.6"/>
<rect x="204.5" y="459.25" width="9" height="1.1" fill="#5e5e5e"/>
<rect x="204.5" y="479.75" width="9" height="1.1" fill="#5e5e5e"/>
<rect x="204.5" y="500.25" width="9" height="1.1" fill="#5e5e5e"/>
<rect x="341.00" y="445.70" width="136.90" height="79.30" fill="url(#cbg)"/>
<rect x="406.60" y="514.10" width="1.5" height="1.6" fill="#7a7a7a"/>
<rect x="416.50" y="514.10" width="1.5" height="1.6" fill="#7a7a7a"/>
<rect x="426.40" y="514.10" width="1.5" height="1.6" fill="#7a7a7a"/>
<rect x="436.30" y="514.10" width="1.5" height="1.6" fill="#7a7a7a"/>
<rect x="446.20" y="514.10" width="1.5" height="1.6" fill="#7a7a7a"/>
<rect x="456.10" y="514.10" width="1.5" height="1.6" fill="#7a7a7a"/>
<rect x="466.00" y="514.10" width="1.5" height="1.6" fill="#7a7a7a"/>
<rect x="475.90" y="514.10" width="1.5" height="1.6" fill="#7a7a7a"/>
<rect x="387.45" y="520.20" width="44.00" height="1.2" fill="#666"/>
<rect x="407.40" y="451.70" width="9.40" height="4.60" fill="url(#bd)"/>
<rect x="418.30" y="453.20" width="1.8" height="1.6" fill="#9a9a9a"/>
<rect x="407.40" y="458.00" width="23.80" height="4.50" fill="url(#bl)"/>
<rect x="432.70" y="459.45" width="1.8" height="1.6" fill="#9a9a9a"/>
<rect x="407.40" y="467.40" width="60.70" height="4.90" fill="url(#bd)"/>
<rect x="469.60" y="469.05" width="1.8" height="1.6" fill="#9a9a9a"/>
<rect x="407.40" y="473.40" width="51.40" height="4.90" fill="url(#bl)"/>
<rect x="460.30" y="475.05" width="1.8" height="1.6" fill="#9a9a9a"/>
<rect x="407.40" y="482.70" width="51.40" height="4.90" fill="url(#bd)"/>
<rect x="460.30" y="484.35" width="1.8" height="1.6" fill="#9a9a9a"/>
<rect x="407.40" y="488.50" width="46.90" height="4.90" fill="url(#bl)"/>
<rect x="455.80" y="490.15" width="1.8" height="1.6" fill="#9a9a9a"/>
<rect x="407.40" y="498.20" width="18.90" height="4.80" fill="url(#bd)"/>
<rect x="427.80" y="499.80" width="1.8" height="1.6" fill="#9a9a9a"/>
<rect x="407.40" y="504.00" width="18.90" height="4.90" fill="url(#bl)"/>
<rect x="427.80" y="505.65" width="1.8" height="1.6" fill="#9a9a9a"/>
<path d="M407.10 449.70v61.30" stroke="#6a6a6a" stroke-width="0.6"/>
<rect x="360.00" y="455.75" width="44.60" height="1.1" fill="#5e5e5e"/>
<rect x="356.00" y="471.75" width="48.60" height="1.1" fill="#5e5e5e"/>
<rect x="361.00" y="487.25" width="43.60" height="1.1" fill="#5e5e5e"/>
<rect x="352.50" y="502.75" width="52.10" height="1.1" fill="#5e5e5e"/>
<rect x="60.20" y="551.70" width="136.80" height="78.60" fill="url(#cbg)"/>
<rect x="82.50" y="619.60" width="1.5" height="1.6" fill="#7a7a7a"/>
<rect x="100.70" y="619.60" width="1.5" height="1.6" fill="#7a7a7a"/>
<rect x="118.90" y="619.60" width="1.5" height="1.6" fill="#7a7a7a"/>
<rect x="137.10" y="619.60" width="1.5" height="1.6" fill="#7a7a7a"/>
<rect x="155.30" y="619.60" width="1.5" height="1.6" fill="#7a7a7a"/>
<rect x="173.50" y="619.60" width="1.5" height="1.6" fill="#7a7a7a"/>
<rect x="191.70" y="619.60" width="1.5" height="1.6" fill="#7a7a7a"/>
<rect x="106.60" y="626.00" width="44.00" height="1.2" fill="#666"/>
<rect x="83.30" y="557.00" width="36.60" height="3.20" fill="url(#bd)"/>
<rect x="121.40" y="557.80" width="1.8" height="1.6" fill="#9a9a9a"/>
<rect x="83.30" y="561.40" width="36.60" height="3.20" fill="url(#bl)"/>
<rect x="121.40" y="562.20" width="1.8" height="1.6" fill="#9a9a9a"/>
<rect x="83.30" y="569.00" width="36.60" height="3.20" fill="url(#bd)"/>
<rect x="121.40" y="569.80" width="1.8" height="1.6" fill="#9a9a9a"/>
<rect x="83.30" y="573.40" width="45.50" height="3.20" fill="url(#bl)"/>
<rect x="130.30" y="574.20" width="1.8" height="1.6" fill="#9a9a9a"/>
<rect x="83.30" y="581.60" width="72.80" height="3.40" fill="url(#bd)"/>
<rect x="157.60" y="582.50" width="1.8" height="1.6" fill="#9a9a9a"/>
<rect x="83.30" y="586.00" width="72.80" height="3.50" fill="url(#bl)"/>
<rect x="157.60" y="586.95" width="1.8" height="1.6" fill="#9a9a9a"/>
<rect x="83.30" y="594.70" width="99.70" height="3.40" fill="url(#bd)"/>
<rect x="184.50" y="595.60" width="1.8" height="1.6" fill="#9a9a9a"/>
<rect x="83.30" y="599.00" width="63.20" height="3.50" fill="url(#bl)"/>
<rect x="148.00" y="599.95" width="1.8" height="1.6" fill="#9a9a9a"/>
<rect x="83.30" y="607.00" width="28.10" height="3.50" fill="url(#bd)"/>
<rect x="112.90" y="607.95" width="1.8" height="1.6" fill="#9a9a9a"/>
<rect x="83.30" y="611.50" width="54.50" height="3.50" fill="url(#bl)"/>
<rect x="139.30" y="612.45" width="1.8" height="1.6" fill="#9a9a9a"/>
<path d="M83.00 555.00v61.50" stroke="#6a6a6a" stroke-width="0.6"/>
<rect x="64" y="560.05" width="17" height="1.1" fill="#5e5e5e"/>
<rect x="64" y="572.05" width="17" height="1.1" fill="#5e5e5e"/>
<rect x="64" y="585.05" width="17" height="1.1" fill="#5e5e5e"/>
<rect x="64" y="598.05" width="17" height="1.1" fill="#5e5e5e"/>
<rect x="64" y="610.25" width="17" height="1.1" fill="#5e5e5e"/>
<rect x="200.20" y="551.70" width="136.80" height="78.60" fill="url(#cbg)"/>
<rect x="221.20" y="619.60" width="1.5" height="1.6" fill="#7a7a7a"/>
<rect x="239.50" y="619.60" width="1.5" height="1.6" fill="#7a7a7a"/>
<rect x="257.80" y="619.60" width="1.5" height="1.6" fill="#7a7a7a"/>
<rect x="276.10" y="619.60" width="1.5" height="1.6" fill="#7a7a7a"/>
<rect x="294.40" y="619.60" width="1.5" height="1.6" fill="#7a7a7a"/>
<rect x="312.70" y="619.60" width="1.5" height="1.6" fill="#7a7a7a"/>
<rect x="331.00" y="619.60" width="1.5" height="1.6" fill="#7a7a7a"/>
<rect x="246.60" y="626.00" width="44.00" height="1.2" fill="#666"/>
<rect x="222.00" y="562.00" width="9.00" height="3.20" fill="url(#bl)"/>
<rect x="232.50" y="562.80" width="1.8" height="1.6" fill="#9a9a9a"/>
<rect x="222.00" y="569.00" width="18.30" height="3.50" fill="url(#bd)"/>
<rect x="241.80" y="569.95" width="1.8" height="1.6" fill="#9a9a9a"/>
<rect x="222.00" y="573.50" width="36.60" height="3.50" fill="url(#bl)"/>
<rect x="260.10" y="574.45" width="1.8" height="1.6" fill="#9a9a9a"/>
<rect x="222.00" y="582.00" width="91.40" height="3.50" fill="url(#bd)"/>
<rect x="314.90" y="582.95" width="1.8" height="1.6" fill="#9a9a9a"/>
<rect x="222.00" y="586.50" width="100.70" height="3.50" fill="url(#bl)"/>
<rect x="324.20" y="587.45" width="1.8" height="1.6" fill="#9a9a9a"/>
<rect x="222.00" y="595.00" width="100.70" height="3.50" fill="url(#bd)"/>
<rect x="324.20" y="595.95" width="1.8" height="1.6" fill="#9a9a9a"/>
<rect x="222.00" y="599.50" width="81.80" height="3.50" fill="url(#bl)"/>
<rect x="305.30" y="600.45" width="1.8" height="1.6" fill="#9a9a9a"/>
<rect x="222.00" y="608.00" width="64.90" height="3.50" fill="url(#bd)"/>
<rect x="288.40" y="608.95" width="1.8" height="1.6" fill="#9a9a9a"/>
<rect x="222.00" y="612.00" width="45.60" height="3.50" fill="url(#bl)"/>
<rect x="269.10" y="612.95" width="1.8" height="1.6" fill="#9a9a9a"/>
<path d="M221.70 560.00v56.50" stroke="#6a6a6a" stroke-width="0.6"/>
<rect x="203" y="560.75" width="16" height="1.1" fill="#5e5e5e"/>
<rect x="203" y="572.25" width="16" height="1.1" fill="#5e5e5e"/>
<rect x="203" y="585.25" width="16" height="1.1" fill="#5e5e5e"/>
<rect x="203" y="598.25" width="16" height="1.1" fill="#5e5e5e"/>
<rect x="203" y="610.75" width="16" height="1.1" fill="#5e5e5e"/>
</svg><!--/PSVG-->
<!--PTXT--><div class="pt" style="left:10.90px;top:88.73px;font-size:6.00px;line-height:6.90px;word-spacing:2.504px"><b>Об&#x27;єкт дослідження</b> – становлення міжособистісних стосунків у ранньому</div>
<div class="pt" style="left:10.90px;top:94.98px;font-size:6.00px;line-height:6.90px">підлітковому віці.</div>
<div class="pt" style="left:10.90px;top:101.23px;font-size:6.00px;line-height:6.90px;word-spacing:10.416px"><b>Предмет дослідження</b> – психологічний супровід становлення</div>
<div class="pt" style="left:10.90px;top:107.48px;font-size:6.00px;line-height:6.90px">міжособистісних стосунків у ранньому підлітковому віці.</div>
<div class="pt" style="left:10.90px;top:113.73px;font-size:6.00px;line-height:6.90px;word-spacing:3.964px"><b>Мета дослідження</b> – теоретично обґрунтувати та емпірично дослідити</div>
<div class="pt" style="left:10.90px;top:119.98px;font-size:6.00px;line-height:6.90px;word-spacing:1.872px">особливості становлення міжособистісних стосунків у ранньому підлітковому</div>
<div class="pt" style="left:10.90px;top:126.23px;font-size:6.00px;line-height:6.90px;word-spacing:3.181px">віці, розробити, впровадити й оцінити ефективність тренінгової програми</div>
<div class="pt" style="left:10.90px;top:132.48px;font-size:6.00px;line-height:6.90px">психологічного супроводу підлітків.</div>
<div class="pt" style="left:10.90px;top:138.73px;font-size:6.00px;line-height:6.90px"><b>Завдання дослідження:</b></div>
<div class="pt" style="left:10.90px;top:144.98px;font-size:6.00px;line-height:6.90px;word-spacing:3.781px">1. Здійснити теоретичний аналіз проблеми становлення міжособистісних</div>
<div class="pt" style="left:10.90px;top:151.23px;font-size:6.00px;line-height:6.90px;word-spacing:1.056px">стосунків у ранньому підлітковому віці та узагальнити основні наукові підходи</div>
<div class="pt" style="left:10.90px;top:157.48px;font-size:6.00px;line-height:6.90px">до її вивчення.</div>
<div class="pt" style="left:10.90px;top:163.73px;font-size:6.00px;line-height:6.90px;word-spacing:1.906px">2. Охарактеризувати вікові закономірності психічного розвитку особистості у</div>
<div class="pt" style="left:10.90px;top:169.98px;font-size:6.00px;line-height:6.90px;word-spacing:2.111px">ранньому підлітковому віці та виявити психологічні чинники, що впливають</div>
<div class="pt" style="left:10.90px;top:176.23px;font-size:6.00px;line-height:6.90px">на якість міжособистісних стосунків підлітків.</div>
<div class="pt" style="left:10.90px;top:182.48px;font-size:6.00px;line-height:6.90px;word-spacing:0.937px">3. Провести емпіричне дослідження особливостей міжособистісних стосунків у</div>
<div class="pt" style="left:10.90px;top:188.73px;font-size:6.00px;line-height:6.90px">ранньому підлітковому віці та проаналізувати отримані результати.</div>
<div class="pt" style="left:10.90px;top:194.98px;font-size:6.00px;line-height:6.90px;word-spacing:1.737px">4. Розробити, впровадити та апробувати тренінгову програму психологічного</div>
<div class="pt" style="left:10.90px;top:201.23px;font-size:6.00px;line-height:6.90px;word-spacing:2.630px">супроводу становлення міжособистісних стосунків у ранньому підлітковому</div>
<div class="pt" style="left:10.90px;top:207.48px;font-size:6.00px;line-height:6.90px">віці, оцінити її ефективність.</div>
<div class="pt" style="left:247.80px;top:88.93px;font-size:6.00px;line-height:6.90px;word-spacing:1.474px"><b>Методи дослідження.</b> У дослідженні застосовано комплекс</div>
<div class="pt" style="left:247.80px;top:95.13px;font-size:6.00px;line-height:6.90px;word-spacing:6.040px">теоретичних, емпіричних і статистичних методів, що</div>
<div class="pt" style="left:247.80px;top:101.33px;font-size:6.00px;line-height:6.90px;word-spacing:1.917px">забезпечили цілісне вивчення становлення міжособистісних</div>
<div class="pt" style="left:247.80px;top:107.53px;font-size:6.00px;line-height:6.90px;word-spacing:0.502px">стосунків у ранньому підлітковому віці та оцінку ефективності</div>
<div class="pt" style="left:247.80px;top:113.73px;font-size:6.00px;line-height:6.90px;word-spacing:8.261px">тренінгової програми психологічного супроводу. На</div>
<div class="pt" style="left:247.80px;top:119.93px;font-size:6.00px;line-height:6.90px;word-spacing:4.393px">теоретичному етапі використовувалися аналіз і синтез,</div>
<div class="pt" style="left:247.80px;top:126.13px;font-size:6.00px;line-height:6.90px;word-spacing:8.624px">індукція й дедукція, узагальнення, систематизація,</div>
<div class="pt" style="left:247.80px;top:132.33px;font-size:6.00px;line-height:6.90px;word-spacing:4.237px">порівняння, абстрагування та конкретизація. Емпіричний</div>
<div class="pt" style="left:247.80px;top:138.53px;font-size:6.00px;line-height:6.90px;word-spacing:3.214px">етап включав низку стандартизованих психодіагностичних</div>
<div class="pt" style="left:247.80px;top:144.73px;font-size:6.00px;line-height:6.90px;word-spacing:1.821px">методик: методики діагностики міжособистісних стосунків Т.</div>
<div class="pt" style="left:247.80px;top:150.93px;font-size:6.00px;line-height:6.90px;word-spacing:0.940px">Лірі, методики «Соціометрія» Дж. Морено, шкали самооцінки</div>
<div class="pt" style="left:247.80px;top:157.13px;font-size:6.00px;line-height:6.90px;word-spacing:2.664px">М. Розенберга, методики «Визначення стилю поведінки в</div>
<div class="pt" style="left:247.80px;top:163.33px;font-size:6.00px;line-height:6.90px;word-spacing:0.973px">конфліктній ситуації» К. Томаса, «Шкали емоційного відгуку»</div>
<div class="pt" style="left:247.80px;top:169.53px;font-size:6.00px;line-height:6.90px">А. Меграбяна та Н. Епштейн.</div>
<div class="pt" style="left:247.80px;top:188.93px;font-size:6.00px;line-height:6.90px;word-spacing:4.902px"><b>Емпірична база дослідження.</b> Емпіричне дослідження</div>
<div class="pt" style="left:247.80px;top:194.98px;font-size:6.00px;line-height:6.90px;word-spacing:1.727px">проводилося на базі Печерського ліцею № 75 м. Києва. У</div>
<div class="pt" style="left:247.80px;top:201.03px;font-size:6.00px;line-height:6.90px;word-spacing:2.273px">дослідженні взяли участь 30 учнів 5-6 класів віком 10-12</div>
<div class="pt" style="left:247.80px;top:207.08px;font-size:6.00px;line-height:6.90px">років.</div>
<div class="pt" style="left:292.20px;top:351.09px;font-size:5.90px;line-height:6.79px;word-spacing:3.813px"><b>Назва програми</b> – тренінг психологічного</div>
<div class="pt" style="left:292.20px;top:357.29px;font-size:5.90px;line-height:6.79px;word-spacing:9.548px">супроводу становлення міжособистісних</div>
<div class="pt" style="left:292.20px;top:363.49px;font-size:5.90px;line-height:6.79px">стосунків «Коло довіри».</div>
<div class="pt" style="left:292.20px;top:369.69px;font-size:5.90px;line-height:6.79px;word-spacing:1.732px"><b>Мета</b> – розвинути в ранніх підлітків навички</div>
<div class="pt" style="left:292.20px;top:375.89px;font-size:5.90px;line-height:6.79px;word-spacing:7.157px">конструктивного спілкування, емпатії та</div>
<div class="pt" style="left:292.20px;top:382.09px;font-size:5.90px;line-height:6.79px;word-spacing:4.513px">мирного розв&#x27;язання конфліктів і знизити</div>
<div class="pt" style="left:292.20px;top:388.29px;font-size:5.90px;line-height:6.79px">рівень напруги й булінгу в класі.</div>
<div class="pt" style="left:292.20px;top:394.49px;font-size:5.90px;line-height:6.79px;word-spacing:2.631px"><b>Основні завдання:</b> підвищення самооцінки,</div>
<div class="pt" style="left:292.20px;top:400.69px;font-size:5.90px;line-height:6.79px;word-spacing:7.720px">навчання активного слухання та «Я-</div>
<div class="pt" style="left:292.20px;top:406.89px;font-size:5.90px;line-height:6.79px;word-spacing:13.027px">повідомлень», розвиток емпатії й</div>
<div class="pt" style="left:292.20px;top:413.09px;font-size:5.90px;line-height:6.79px;word-spacing:9.590px">конструктивних стратегій поведінки в</div>
<div class="pt" style="left:292.20px;top:419.29px;font-size:5.90px;line-height:6.79px;word-spacing:2.852px">конфлікті, зміцнення згуртованості класу та</div>
<div class="pt" style="left:292.20px;top:425.49px;font-size:5.90px;line-height:6.79px">формування норм взаємоповаги.</div>
<div class="pt" style="left:82.00px;top:9.37px;font-size:9.30px;line-height:10.70px;transform:scaleX(0.9879);transform-origin:0 0;color:#4a4a4a">БЕРДЯНСЬКИЙ ДЕРЖАВНИЙ ПЕДАГОГІЧНИЙ УНІВЕРСИТЕТ</div>
<div class="pt" style="left:12.40px;top:26.21px;font-size:13.60px;line-height:15.64px;transform:scaleX(0.9251);transform-origin:0 0;-webkit-text-stroke:0.35px #1a1a1a;color:#1a1a1a"><b>ПСИХОЛОГІЧНИЙ СУПРОВІД СТАНОВЛЕННЯ МІЖОСОБИСТІСНИХ</b></div>
<div class="pt" style="left:72.40px;top:43.71px;font-size:13.60px;line-height:15.64px;transform:scaleX(0.9347);transform-origin:0 0;-webkit-text-stroke:0.35px #1a1a1a;color:#1a1a1a"><b>СТОСУНКІВ У РАННЬОМУ ПІДЛІТКОВОМУ ВІЦІ</b></div>
<div class="pt" style="left:44.30px;top:64.82px;font-size:5.00px;line-height:5.75px;transform:scaleX(1.2040);transform-origin:0 0"><b>Виконала:</b> здобувачка вищої освіти, 2 курсу, м20ВП а групи спеціальність 053 Психологія · КУПРЕЄВА Юлія Станіславівна</div>
<div class="pt" style="left:146.80px;top:72.22px;font-size:5.00px;line-height:5.75px;transform:scaleX(1.1925);transform-origin:0 0"><b>Керівник:</b> к. психол. н., доцент · Ірина ЧЕРЕЗОВА</div>
<div class="pt" style="left:188.50px;top:227.31px;font-size:6.20px;line-height:7.13px;transform:scaleX(1.0121);transform-origin:0 0"><b>Результати дослідження</b></div>
<div class="pt" style="left:216.20px;top:454.71px;font-size:6.20px;line-height:7.13px;transform:scaleX(0.9954);transform-origin:0 0"><b>Висновки</b></div>
<div class="pt" style="left:26.80px;top:326.24px;font-size:4.30px;line-height:4.94px;transform:scaleX(1.0692);transform-origin:0 0;color:#3a3a3a">Рис. 1 - Динаміка розподілу підлітків за типами</div>
<div class="pt" style="left:12.00px;top:331.94px;font-size:4.30px;line-height:4.94px;transform:scaleX(1.0646);transform-origin:0 0;color:#3a3a3a">міжособистісних стосунків до і після програми «Коло довіри»</div>
<div class="pt" style="left:51.20px;top:337.64px;font-size:4.30px;line-height:4.94px;transform:scaleX(1.0500);transform-origin:0 0;color:#3a3a3a">(методика Т. Лірі, n = 30)</div>
<div class="pt" style="left:151.30px;top:326.24px;font-size:4.30px;line-height:4.94px;transform:scaleX(1.0734);transform-origin:0 0;color:#3a3a3a">Рис. 2 - Динаміка рівнів самооцінки за шкалою М. Розенберга</div>
<div class="pt" style="left:160.30px;top:331.94px;font-size:4.30px;line-height:4.94px;transform:scaleX(1.0650);transform-origin:0 0;color:#3a3a3a">до і після тренінгової програми «Коло довіри» (n = 30)</div>
<div class="pt" style="left:296.40px;top:326.24px;font-size:4.30px;line-height:4.94px;transform:scaleX(1.0860);transform-origin:0 0;color:#3a3a3a">Рис. 3 - Динаміка розподілу підлітків за соціометричними</div>
<div class="pt" style="left:298.80px;top:331.94px;font-size:4.30px;line-height:4.94px;transform:scaleX(1.0628);transform-origin:0 0;color:#3a3a3a">статусами до і після програми «Коло довіри» (методика</div>
<div class="pt" style="left:337.00px;top:337.64px;font-size:4.30px;line-height:4.94px;transform:scaleX(1.0615);transform-origin:0 0;color:#3a3a3a">Дж.Морено, n = 30)</div>
<div class="pt" style="left:10.70px;top:431.24px;font-size:4.30px;line-height:4.94px;transform:scaleX(1.0669);transform-origin:0 0;color:#3a3a3a">Рис. 4 - Динаміка розподілу підлітків за домінуючими стилями</div>
<div class="pt" style="left:12.70px;top:437.44px;font-size:4.30px;line-height:4.94px;transform:scaleX(1.0797);transform-origin:0 0;color:#3a3a3a">поведінки в конфлікті до і після тренінгової програми «Коло</div>
<div class="pt" style="left:38.70px;top:443.24px;font-size:4.30px;line-height:4.94px;transform:scaleX(1.0471);transform-origin:0 0;color:#3a3a3a">довіри» (методика К. Томаса, n = 30)</div>
<div class="pt" style="left:160.40px;top:431.24px;font-size:4.30px;line-height:4.94px;transform:scaleX(1.0765);transform-origin:0 0;color:#3a3a3a">Рис. 5 - Динаміка рівня емоційної емпатії за шкалою</div>
<div class="pt" style="left:155.60px;top:437.44px;font-size:4.30px;line-height:4.94px;transform:scaleX(1.0646);transform-origin:0 0;color:#3a3a3a">емоційного відгуку А. Меграбяна та Н. Епштейн до і після</div>
<div class="pt" style="left:182.50px;top:443.24px;font-size:4.30px;line-height:4.94px;transform:scaleX(1.0561);transform-origin:0 0;color:#3a3a3a">програми «Коло довіри» (n = 30)</div><!--/PTXT-->
</div>
</body></html>
